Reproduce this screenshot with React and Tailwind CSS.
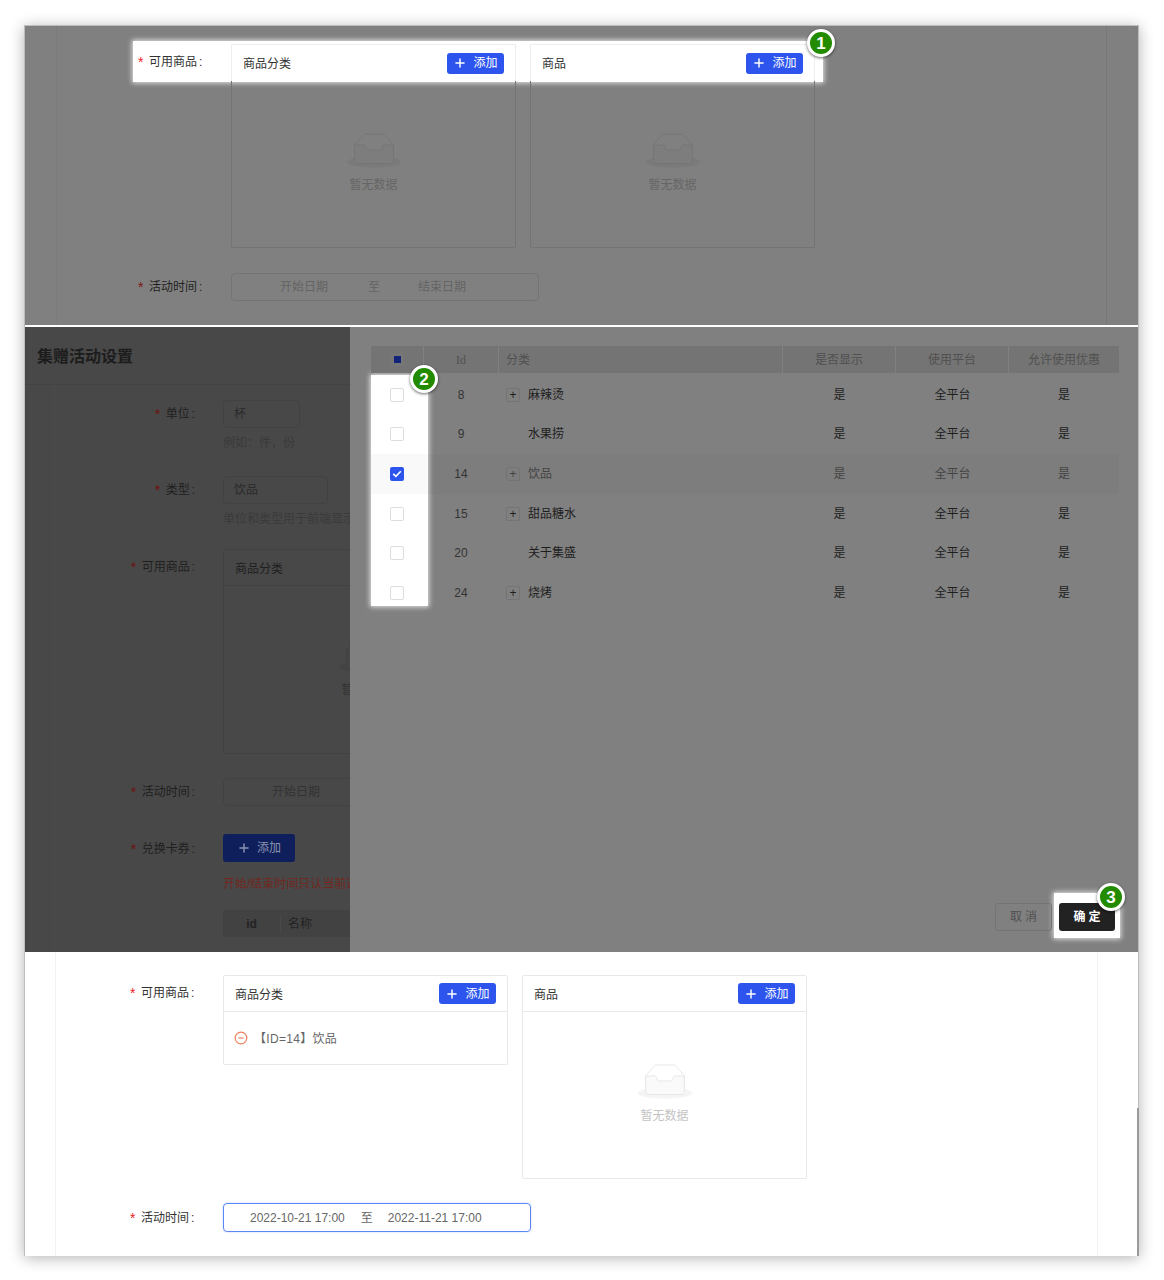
import { Plus } from "lucide-react";

const rows = [
  { id: 8, name: "麻辣烫", expand: true },
  { id: 9, name: "水果捞" },
  { id: 14, name: "饮品", expand: true, checked: true },
  { id: 15, name: "甜品糖水", expand: true },
  { id: 20, name: "关于集盛" },
  { id: 24, name: "烧烤", expand: true },
];

function Badge({ n, className }) {
  return (
    <div className={`absolute z-20 flex h-[28px] w-[28px] items-center justify-center rounded-full border-[3px] border-white bg-[#228b00] text-[17px] leading-none font-bold text-white shadow-[0_1px_3px_rgba(0,0,0,0.6)] ${className}`}>
      {n}
    </div>
  );
}

function EmptyIcon({ ground, stroke, fill }) {
  return (
    <svg width="54" height="35" viewBox="0 0 64 41">
      <g transform="translate(0 1)" fill="none" fillRule="evenodd">
        <ellipse fill={ground} cx="32" cy="33" rx="32" ry="7" />
        <g fillRule="nonzero" stroke={stroke}>
          <path d="M55 12.76L44.854 1.258C44.367.474 43.656 0 42.907 0H21.093c-.749 0-1.46.474-1.947 1.257L9 12.761V22h46v-9.24z" />
          <path
            d="M41.613 15.931c0-1.605.994-2.93 2.227-2.931H55v18.137C55 33.26 53.68 35 52.05 35h-40.1C10.32 35 9 33.259 9 31.137V13h11.16c1.233 0 2.227 1.323 2.227 2.928v.022c0 1.605 1.005 2.901 2.237 2.901h14.752c1.232 0 2.237-1.308 2.237-2.913v-.007z"
            fill={fill}
          />
        </g>
      </g>
    </svg>
  );
}

function Label({ text, star = "text-[#ed4014]", color = "text-[#333]", className = "" }) {
  return (
    <div className={`flex shrink-0 text-[12px] leading-[18px] ${color} ${className}`}>
      <span className={`w-[11px] text-[14px] ${star}`}>*</span>
      {text}
      <span className="ml-[2px]">:</span>
    </div>
  );
}

function AddButton({ className = "bg-[#2d55ee]", width = "w-[57px]" }) {
  return (
    <button className={`flex h-[21px] items-center justify-center gap-[6px] rounded-[3px] text-[12px] text-white ${width} ${className}`}>
      <Plus size={14} strokeWidth={2.5} />
      添加
    </button>
  );
}

function CardHeader({ title, border }) {
  return (
    <div className={`flex h-[37px] items-center justify-between border-x border-t pr-[11px] pl-[11px] text-[12px] text-[#333] ${border}`}>
      <span className="pt-[2px]">{title}</span>
      <AddButton />
    </div>
  );
}

function EmptyBody({ dim, className }) {
  return (
    <div className={`flex flex-col items-center rounded-b-[2px] border ${className}`}>
      {dim ? (
        <EmptyIcon ground="#7a7a7a" stroke="#747474" fill="#7d7d7d" />
      ) : (
        <EmptyIcon ground="#f5f5f5" stroke="#e3e3e3" fill="#fafafa" />
      )}
      <div className={`mt-[8px] text-[12px] leading-[18px] ${dim ? "text-[#666]" : "text-[#c4c4c4]"}`}>暂无数据</div>
    </div>
  );
}

function TopPanel() {
  return (
    <section className="relative h-[299px] overflow-hidden bg-[#808080]">
      <div className="absolute top-[15px] left-[108px] h-[41px] w-[690px] bg-white shadow-[0_0_5px_1px_rgba(255,255,255,0.8)]" />
      <div className="flex h-full justify-between">
        <div className="w-[32px] border-r border-[#7c7c7c]" />
        <div className="w-[32px] border-l border-[#777]" />
      </div>
      <div className="absolute inset-0 z-10 pt-[18px] pl-[113px]">
        <div className="flex">
          <Label text="可用商品" className="w-[77px] pt-[9px]" star="text-[#ed1c24]" />
          <div className="ml-[16px] w-[285px]">
            <CardHeader title="商品分类" border="border-[#eee]" />
            <EmptyBody dim className="h-[167px] border-t-0 border-[#747474] pt-[52px]" />
          </div>
          <div className="ml-[14px] w-[285px]">
            <CardHeader title="商品" border="border-[#eee]" />
            <EmptyBody dim className="h-[167px] border-t-0 border-[#747474] pt-[52px]" />
          </div>
        </div>
        <div className="mt-[25px] flex items-center">
          <Label text="活动时间" className="w-[77px]" star="text-[#7a1515]" color="text-[#222]" />
          <div className="ml-[16px] flex h-[28px] w-[308px] items-center rounded-[4px] border border-[#747474] pl-[48px] text-[12px] text-[#646464]">
            <span>开始日期</span>
            <span className="ml-[40px]">至</span>
            <span className="ml-[38px]">结束日期</span>
          </div>
        </div>
      </div>
    </section>
  );
}

function DarkForm() {
  return (
    <div className="relative w-[325px] shrink-0 overflow-hidden bg-[#484848]">
      <div className="absolute top-[58px] bottom-0 left-[29px] w-px bg-[#4b4b4b]" />
      <div className="flex h-[58px] items-center border-b border-[#434343] pt-[2px] pl-[12px] text-[16px] font-bold text-[#1c1c1c]">
        集赠活动设置
      </div>
      <div className="relative whitespace-nowrap">
        <div className="mt-[15px] flex">
          <Label text="单位" className="mr-[28px] w-[170px] justify-end pt-[5px]" star="text-[#701010]" color="text-[#1f1f1f]" />
          <div className="flex h-[28px] w-[77px] items-center rounded-[4px] border border-[#424242] pl-[10px] text-[12px] text-[#2a2a2a]">杯</div>
        </div>
        <div className="mt-[6px] pl-[198px] text-[12px] leading-[18px] text-[#3a3a3a]">例如：件，份</div>
        <div className="mt-[24px] flex">
          <Label text="类型" className="mr-[28px] w-[170px] justify-end pt-[5px]" star="text-[#701010]" color="text-[#1f1f1f]" />
          <div className="flex h-[28px] w-[105px] items-center rounded-[4px] border border-[#424242] pl-[10px] text-[12px] text-[#2a2a2a]">饮品</div>
        </div>
        <div className="mt-[6px] pl-[198px] text-[12px] leading-[18px] text-[#3a3a3a]">单位和类型用于前端显示</div>
        <div className="mt-[21px] flex">
          <Label text="可用商品" className="mr-[28px] w-[170px] justify-end pt-[9px]" star="text-[#701010]" color="text-[#1f1f1f]" />
          <div className="w-[285px] shrink-0 rounded-[2px] border border-[#424242]">
            <div className="flex h-[36px] items-center border-b border-[#424242] pt-[2px] pl-[11px] text-[12px] text-[#1f1f1f]">商品分类</div>
            <div className="flex h-[167px] flex-col items-center pt-[52px]">
              <EmptyIcon ground="#444" stroke="#404040" fill="#464646" />
              <div className="mt-[8px] text-[12px] leading-[18px] text-[#333]">暂无数据</div>
            </div>
          </div>
        </div>
        <div className="mt-[24px] flex">
          <Label text="活动时间" className="mr-[28px] w-[170px] justify-end pt-[5px]" star="text-[#701010]" color="text-[#1f1f1f]" />
          <div className="flex h-[28px] w-[308px] shrink-0 items-center rounded-[4px] border border-[#424242] pl-[48px] text-[12px] text-[#333]">开始日期</div>
        </div>
        <div className="mt-[28px] flex">
          <Label text="兑换卡券" className="mr-[28px] w-[170px] justify-end pt-[6px]" star="text-[#701010]" color="text-[#1f1f1f]" />
          <AddButton className="!h-[28px] bg-[#0e1f5c] !text-[#8b93ad]" width="w-[72px]" />
        </div>
        <div className="mt-[13px] pl-[198px] text-[12px] leading-[18px] text-[#72271e]">开始/结束时间只认当前选择的时间</div>
        <div className="mt-[17px] ml-[198px] flex h-[27px] w-[300px] items-center bg-[#424242] text-[12px] text-[#222]">
          <span className="w-[58px] border-r border-[#484848] text-center font-bold">id</span>
          <span className="pl-[7px]">名称</span>
        </div>
      </div>
    </div>
  );
}

function Checkbox({ checked }) {
  if (checked) {
    return (
      <div className="flex h-[14px] w-[14px] items-center justify-center rounded-[2px] bg-[#2d55ee]">
        <svg width="10" height="8" viewBox="0 0 10 8" fill="none">
          <path d="M1.2 3.8 3.9 6.4 8.8 1.2" stroke="#fff" strokeWidth="1.6" />
        </svg>
      </div>
    );
  }
  return <div className="h-[14px] w-[14px] rounded-[2px] border border-[#ddd] bg-white" />;
}

function ProductTable() {
  return (
    <div className="relative z-10 text-[12px]">
      <div className="flex h-[27px] items-center gap-[1px] text-[#505050]">
        <div className="flex h-full w-[52px] items-center justify-center bg-[#747474]">
          <div className="flex h-[13px] w-[13px] items-center justify-center rounded-[2px] bg-[#777]">
            <div className="h-[7px] w-[7px] bg-[#12247a]" />
          </div>
        </div>
        <div className="flex h-full w-[74px] items-center justify-center bg-[#747474] font-['Liberation_Serif',serif]">Id</div>
        <div className="flex h-full w-[283px] items-center bg-[#747474] pl-[7px]">分类</div>
        <div className="flex h-full w-[112px] items-center justify-center bg-[#747474]">是否显示</div>
        <div className="flex h-full w-[112px] items-center justify-center bg-[#747474]">使用平台</div>
        <div className="flex h-full w-[110px] items-center justify-center bg-[#747474]">允许使用优惠</div>
      </div>
      <div className="pt-[2px]">
        {rows.map((r) => (
          <div key={r.id} className={`flex h-[39.6px] items-center ${r.checked ? "bg-black/[0.025] text-[#444]" : "text-[#1e1e1e]"}`}>
            <div className="flex w-[52px] justify-center"><Checkbox checked={r.checked} /></div>
            <div className="w-[76px] text-center text-[#333]">{r.id}</div>
            <div className="flex w-[284px] items-center pl-[7px]">
              {r.expand ? (
                <span className="flex h-[14px] w-[14px] items-center justify-center rounded-[2px] border border-[#747474] text-[12px] leading-none">+</span>
              ) : (
                <span className="w-[14px]" />
              )}
              <span className="ml-[8px]">{r.name}</span>
            </div>
            <div className="w-[113px] text-center">是</div>
            <div className="w-[113px] text-center">全平台</div>
            <div className="w-[110px] text-center">是</div>
          </div>
        ))}
      </div>
    </div>
  );
}

function MiddlePanel() {
  return (
    <section className="flex h-[625px] overflow-hidden">
      <DarkForm />
      <div className="relative flex flex-1 flex-col justify-between bg-[#808080] pt-[19px] pr-[20px] pb-[21px] pl-[21px]">
        <div className="absolute top-[48px] left-[21px] h-[231px] w-[57px] bg-white shadow-[0_0_5px_1px_rgba(255,255,255,0.8)]" />
        <ProductTable />
        <div className="relative flex justify-end gap-[7px] pr-[4px] text-[12px]">
          <div className="absolute top-[-10px] right-[-1px] h-[45px] w-[66px] bg-white shadow-[0_0_5px_1px_rgba(255,255,255,0.8)]" />
          <button className="relative h-[28px] w-[57px] rounded-[3px] border border-[#747474] pl-[3px] tracking-[3px] text-[#505050]">取消</button>
          <button className="relative h-[28px] w-[56px] rounded-[3px] bg-[#222] pl-[3px] font-bold tracking-[3px] text-white">确定</button>
        </div>
      </div>
    </section>
  );
}

function BottomPanel() {
  return (
    <section className="flex h-[304px] justify-between bg-white">
      <div className="relative flex-1 pt-[23px] pl-[105px]">
        <div className="absolute top-0 bottom-0 left-[30px] w-px bg-[#f2f2f2]" />
        <div className="flex">
          <Label text="可用商品" className="w-[93px] pt-[9px]" star="text-[#ed1c24]" />
          <div className="w-[285px]">
            <div className="flex h-[37px] items-center justify-between rounded-t-[2px] border border-[#e8e8e8] px-[11px] text-[12px] text-[#333]">
              <span className="pt-[2px]">商品分类</span>
              <AddButton />
            </div>
            <div className="flex h-[53px] items-center rounded-b-[2px] border border-t-0 border-[#e8e8e8] pl-[10px] text-[12px] text-[#666]">
              <svg width="14" height="14" viewBox="0 0 14 14" fill="none">
                <circle cx="7" cy="7" r="5.8" stroke="#f0805f" strokeWidth="1.2" />
                <path d="M4.4 7h5.2" stroke="#f0805f" strokeWidth="1.2" />
              </svg>
              <span className="ml-[6px] pt-[1px] tracking-[0.3px]">【ID=14】饮品</span>
            </div>
          </div>
          <div className="ml-[14px] w-[285px]">
            <div className="flex h-[37px] items-center justify-between rounded-t-[2px] border border-[#e8e8e8] px-[11px] text-[12px] text-[#333]">
              <span className="pt-[2px]">商品</span>
              <AddButton />
            </div>
            <EmptyBody className="h-[167px] border-t-0 border-[#e8e8e8] pt-[52px]" />
          </div>
        </div>
        <div className="mt-[24px] flex items-center">
          <Label text="活动时间" className="w-[93px]" star="text-[#ed1c24]" />
          <div className="flex h-[29px] w-[308px] items-center rounded-[4px] border border-[#5b86f5] pl-[26px] text-[12px] text-[#666] shadow-[0_0_2px_rgba(91,134,245,0.4)]">
            <span>2022-10-21 17:00</span>
            <span className="ml-[16px]">至</span>
            <span className="ml-[15px]">2022-11-21 17:00</span>
          </div>
        </div>
      </div>
      <div className="flex w-[41px] justify-end border-l border-[#f2f2f2]">
        <div className="-mr-px mt-[156px] h-[148px] w-[2px] bg-[#9a9a9a]" />
      </div>
    </section>
  );
}

export default function App() {
  return (
    <div className="relative h-[1280px] w-[1164px] overflow-hidden bg-white pt-[25px] pl-[24px] font-['Liberation_Sans','Noto_Sans_CJK_SC',sans-serif]">
      <div className="flex h-[1231px] w-[1115px] flex-col border-x border-t border-[#bdbdbd] border-b-[#e4e4e4] shadow-[0_2px_14px_rgba(0,0,0,0.3)]">
        <TopPanel />
        <div className="h-[2px] bg-white" />
        <MiddlePanel />
        <BottomPanel />
      </div>
      <Badge n="1" className="top-[29px] left-[807px]" />
      <Badge n="2" className="top-[365px] left-[410px]" />
      <Badge n="3" className="top-[883px] left-[1097px]" />
    </div>
  );
}
